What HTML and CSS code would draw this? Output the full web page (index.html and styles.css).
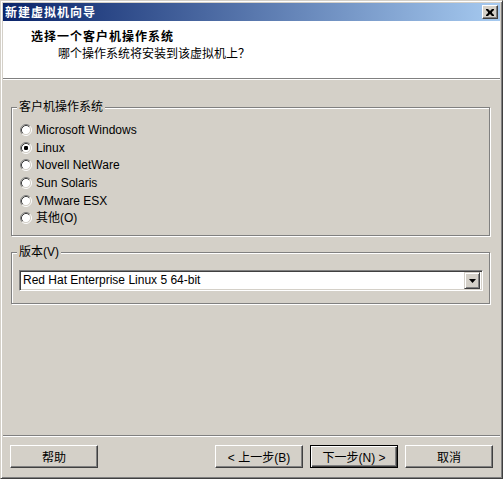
FILE: index.html
```html
<!DOCTYPE html>
<html lang="zh-CN">
<head>
<meta charset="utf-8">
<title>新建虚拟机向导</title>
<link rel="stylesheet" href="styles.css">
</head>
<body>
<div class="window">
  <div class="titlebar">
    <span class="title">新建虚拟机向导</span>
    <span class="close">
      <svg width="8" height="7" viewBox="0 0 8 7"><path d="M0 0h2l2 2 2-2h2v1l-2 2v1l2 2v1h-2l-2-2-2 2h-2v-1l2-2v-1l-2-2z" fill="#000"/></svg>
    </span>
  </div>
  <div class="header">
    <div class="heading">选择一个客户机操作系统</div>
    <div class="subheading">哪个操作系统将安装到该虚拟机上？</div>
  </div>
  <div class="sep"></div>
  <div class="body">
    <div class="group group-os">
      <span class="legend">客户机操作系统</span>
      <div class="radio-list">
        <div class="radio-row"><svg class="radio" width="12" height="12" viewBox="0 0 12 12"><circle cx="6" cy="6" r="4.5" fill="#fff"/><path d="M2.11 9.89A5.5 5.5 0 0 1 9.89 2.11" stroke="#808080" fill="none"/><path d="M9.89 2.11A5.5 5.5 0 0 1 2.11 9.89" stroke="#fff" fill="none"/><path d="M2.82 9.18A4.5 4.5 0 0 1 9.18 2.82" stroke="#404040" fill="none"/><path d="M9.18 2.82A4.5 4.5 0 0 1 2.82 9.18" stroke="#d4d0c8" fill="none"/></svg><span>Microsoft Windows</span></div>
        <div class="radio-row"><svg class="radio" width="12" height="12" viewBox="0 0 12 12"><circle cx="6" cy="6" r="4.5" fill="#fff"/><path d="M2.11 9.89A5.5 5.5 0 0 1 9.89 2.11" stroke="#808080" fill="none"/><path d="M9.89 2.11A5.5 5.5 0 0 1 2.11 9.89" stroke="#fff" fill="none"/><path d="M2.82 9.18A4.5 4.5 0 0 1 9.18 2.82" stroke="#404040" fill="none"/><path d="M9.18 2.82A4.5 4.5 0 0 1 2.82 9.18" stroke="#d4d0c8" fill="none"/><rect x="4" y="4" width="4" height="4" rx="1.2" fill="#000"/></svg><span>Linux</span></div>
        <div class="radio-row"><svg class="radio" width="12" height="12" viewBox="0 0 12 12"><circle cx="6" cy="6" r="4.5" fill="#fff"/><path d="M2.11 9.89A5.5 5.5 0 0 1 9.89 2.11" stroke="#808080" fill="none"/><path d="M9.89 2.11A5.5 5.5 0 0 1 2.11 9.89" stroke="#fff" fill="none"/><path d="M2.82 9.18A4.5 4.5 0 0 1 9.18 2.82" stroke="#404040" fill="none"/><path d="M9.18 2.82A4.5 4.5 0 0 1 2.82 9.18" stroke="#d4d0c8" fill="none"/></svg><span>Novell NetWare</span></div>
        <div class="radio-row"><svg class="radio" width="12" height="12" viewBox="0 0 12 12"><circle cx="6" cy="6" r="4.5" fill="#fff"/><path d="M2.11 9.89A5.5 5.5 0 0 1 9.89 2.11" stroke="#808080" fill="none"/><path d="M9.89 2.11A5.5 5.5 0 0 1 2.11 9.89" stroke="#fff" fill="none"/><path d="M2.82 9.18A4.5 4.5 0 0 1 9.18 2.82" stroke="#404040" fill="none"/><path d="M9.18 2.82A4.5 4.5 0 0 1 2.82 9.18" stroke="#d4d0c8" fill="none"/></svg><span>Sun Solaris</span></div>
        <div class="radio-row"><svg class="radio" width="12" height="12" viewBox="0 0 12 12"><circle cx="6" cy="6" r="4.5" fill="#fff"/><path d="M2.11 9.89A5.5 5.5 0 0 1 9.89 2.11" stroke="#808080" fill="none"/><path d="M9.89 2.11A5.5 5.5 0 0 1 2.11 9.89" stroke="#fff" fill="none"/><path d="M2.82 9.18A4.5 4.5 0 0 1 9.18 2.82" stroke="#404040" fill="none"/><path d="M9.18 2.82A4.5 4.5 0 0 1 2.82 9.18" stroke="#d4d0c8" fill="none"/></svg><span>VMware ESX</span></div>
        <div class="radio-row"><svg class="radio" width="12" height="12" viewBox="0 0 12 12"><circle cx="6" cy="6" r="4.5" fill="#fff"/><path d="M2.11 9.89A5.5 5.5 0 0 1 9.89 2.11" stroke="#808080" fill="none"/><path d="M9.89 2.11A5.5 5.5 0 0 1 2.11 9.89" stroke="#fff" fill="none"/><path d="M2.82 9.18A4.5 4.5 0 0 1 9.18 2.82" stroke="#404040" fill="none"/><path d="M9.18 2.82A4.5 4.5 0 0 1 2.82 9.18" stroke="#d4d0c8" fill="none"/></svg><span>其他(O)</span></div>
      </div>
    </div>
    <div class="group group-ver">
      <span class="legend">版本(V)</span>
      <div class="select">
        <span class="select-text">Red Hat Enterprise Linux 5 64-bit</span>
        <span class="select-btn"><svg width="7" height="4" viewBox="0 0 7 4"><path d="M0 0h7L3.5 4z" fill="#000"/></svg></span>
      </div>
    </div>
  </div>
  <div class="sep"></div>
  <div class="footer">
    <button class="btn">帮助</button>
    <div class="spacer"></div>
    <button class="btn">&lt; 上一步(B)</button>
    <button class="btn btn-default">下一步(N) &gt;</button>
    <button class="btn">取消</button>
  </div>
</div>
</body>
</html>
```

FILE: styles.css
```css
* { box-sizing: border-box; }
html, body { margin: 0; padding: 0; background: #d4d0c8; }
body {
  font-family: "Liberation Sans", "Noto Sans CJK SC", sans-serif;
  font-size: 12px;
  color: #000;
}
.window {
  width: 503px;
  height: 479px;
  display: flex;
  flex-direction: column;
  background: #d4d0c8;
  border-top: 1px solid #d4d0c8;
  border-left: 1px solid #d4d0c8;
  border-right: 1px solid #404040;
  border-bottom: 1px solid #404040;
  box-shadow: inset 1px 1px 0 #fff, inset -1px -1px 0 #808080;
  padding: 2px;
}
.titlebar {
  height: 18px;
  flex: none;
  display: flex;
  align-items: center;
  justify-content: space-between;
  padding: 0 2px 0 2px;
  background: linear-gradient(to right, #0a246a, #a6caf0);
}
.title {
  color: #fff;
  font-weight: bold;
  font-family: "Noto Sans CJK SC", sans-serif;
  font-size: 12px;
  letter-spacing: 1px;
  line-height: 18px;
}
.close {
  width: 16px;
  height: 14px;
  display: flex;
  align-items: center;
  justify-content: center;
  background: #d4d0c8;
  border-top: 1px solid #fff;
  border-left: 1px solid #fff;
  border-right: 1px solid #404040;
  border-bottom: 1px solid #404040;
  box-shadow: inset -1px -1px 0 #808080;
}
.header {
  height: 57px;
  flex: none;
  background: #fff;
  padding: 7px 0 0 28px;
}
.heading {
  font-family: "Noto Sans CJK SC", sans-serif;
  font-weight: bold;
  letter-spacing: 1px;
  line-height: 16px;
}
.subheading {
  font-family: "Noto Sans CJK SC", sans-serif;
  line-height: 16px;
  margin-top: 1px;
  padding-left: 27px;
}
.sep {
  height: 2px;
  flex: none;
  border-top: 1px solid #808080;
  border-bottom: 1px solid #fff;
}
.body {
  flex: 1;
  padding: 27px 10px 0 8px;
}
.group {
  position: relative;
  border: 1px solid #808080;
  box-shadow: inset 1px 1px 0 #fff, 1px 1px 0 #fff;
}
.group-os {
  height: 129px;
  padding: 13px 0 0 8px;
}
.group-ver {
  height: 52px;
  margin-top: 16px;
  padding: 17px 0 0 7px;
}
.legend {
  position: absolute;
  top: -9px;
  left: 5px;
  padding: 0 2px;
  background: #d4d0c8;
  line-height: 16px;
  font-family: "Liberation Sans", "Noto Sans CJK SC", sans-serif;
}
.radio-row {
  height: 17.7px;
  display: flex;
  align-items: center;
  gap: 4px;
  line-height: 14px;
}
.radio { flex: none; }
.select {
  width: 464px;
  height: 21px;
  display: flex;
  align-items: center;
  background: #fff;
  border-top: 1px solid #808080;
  border-left: 1px solid #808080;
  border-right: 1px solid #fff;
  border-bottom: 1px solid #fff;
  box-shadow: inset 1px 1px 0 #404040, inset -1px -1px 0 #d4d0c8;
  padding: 2px 2px 2px 3px;
}
.select-text { flex: 1; line-height: 15px; }
.select-btn {
  width: 16px;
  height: 17px;
  display: flex;
  align-items: center;
  justify-content: center;
  background: #d4d0c8;
  border-top: 1px solid #d4d0c8;
  border-left: 1px solid #d4d0c8;
  border-right: 1px solid #404040;
  border-bottom: 1px solid #404040;
  box-shadow: inset 1px 1px 0 #fff, inset -1px -1px 0 #808080;
}
.footer {
  height: 39px;
  flex: none;
  display: flex;
  align-items: flex-start;
  gap: 7px;
  padding: 8px 7px 0 7px;
}
.spacer { flex: 1; }
.btn {
  width: 88px;
  height: 23px;
  margin: 0;
  padding: 0;
  background: #d4d0c8;
  font-family: "Liberation Sans", "Noto Sans CJK SC", sans-serif;
  font-size: 12px;
  color: #000;
  border-top: 1px solid #fff;
  border-left: 1px solid #fff;
  border-right: 1px solid #404040;
  border-bottom: 1px solid #404040;
  box-shadow: inset -1px -1px 0 #808080;
  border-radius: 0;
}
.btn-default {
  border: 1px solid #000;
  box-shadow: inset 1px 1px 0 #fff, inset -1px -1px 0 #404040, inset -2px -2px 0 #808080;
}
```
